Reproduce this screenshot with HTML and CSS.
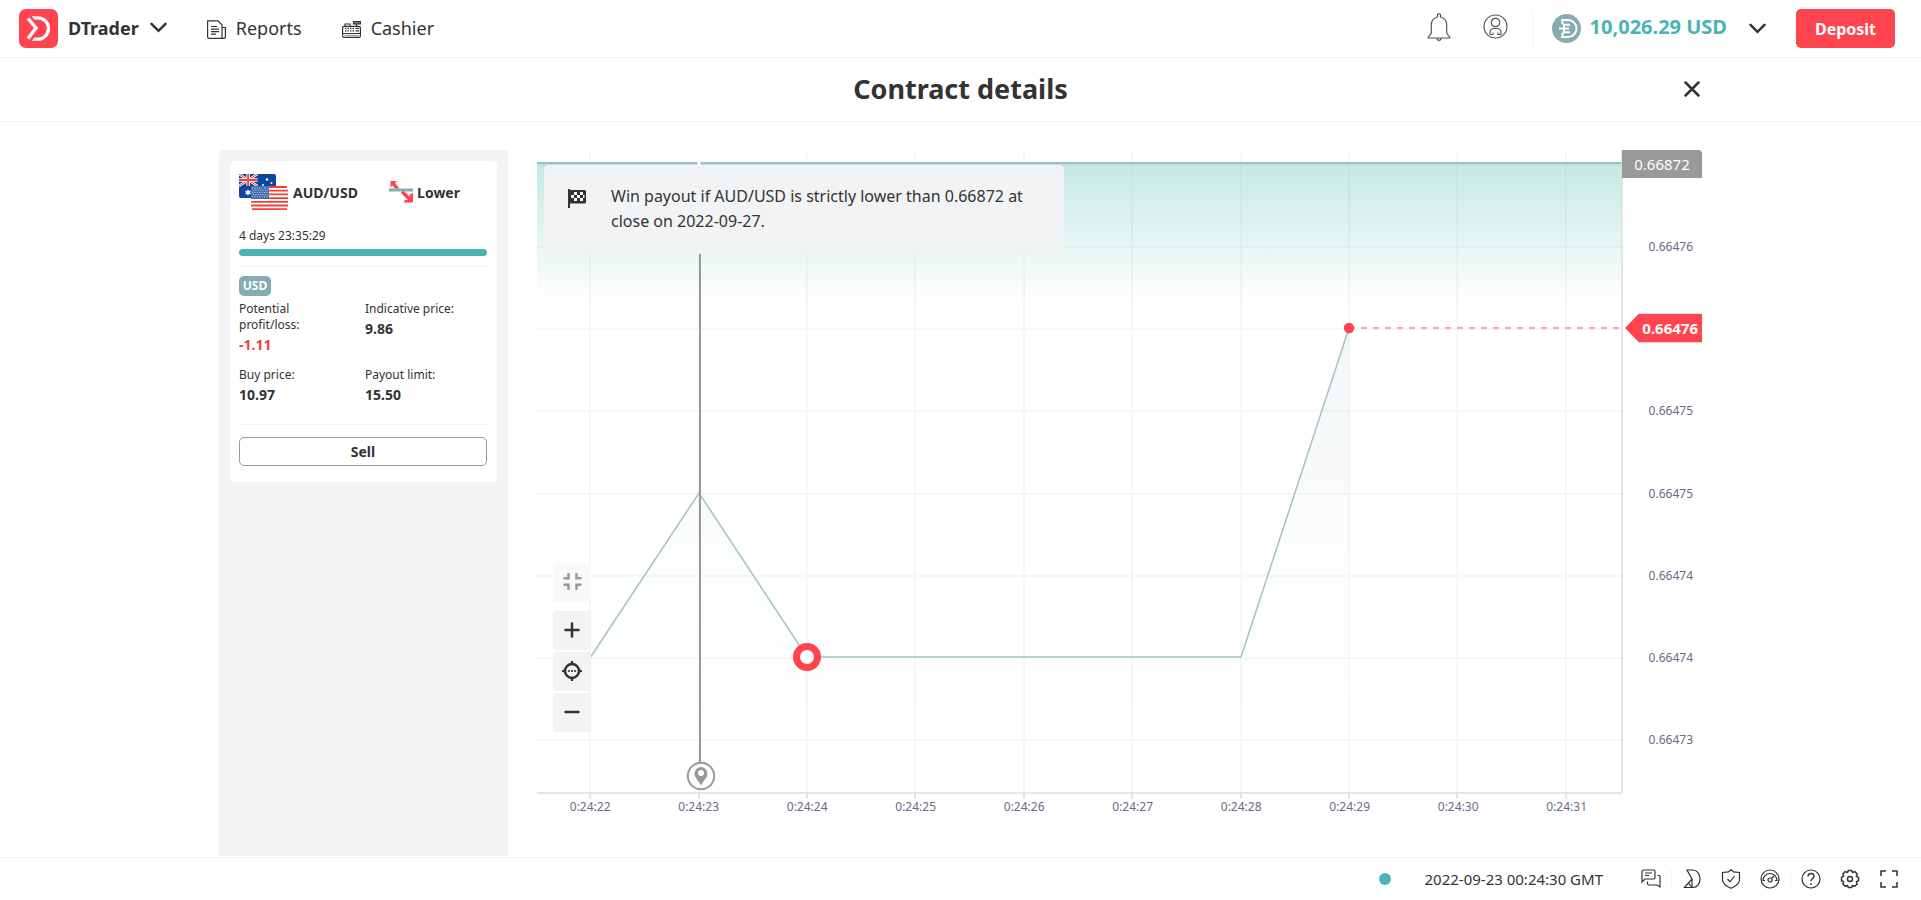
FILE: index.html
```html
<!DOCTYPE html>
<html lang="en">
<head>
<meta charset="utf-8">
<title>DTrader - Contract details</title>
<link rel="stylesheet" href="styles.css">
</head>
<body>
<header class="header">
  <svg class="logo" viewBox="0 0 39 39" aria-hidden="true"><rect width="39" height="39" rx="7" fill="#ff444f"/><path d="M13 8.800h6a10.500 10.700 0 0 1 0 21.400h-6.500" fill="none" stroke="#fff" stroke-width="3.200"/><path d="M9.500 7.500L18 19.500 9.500 31.500" fill="none" stroke="#ff444f" stroke-width="6"/><path d="M9 9.500L17 19 9 29.500" fill="none" stroke="#fff" stroke-width="3.400"/></svg>
  <button class="platform" type="button">DTrader
    <svg width="17" height="11" viewBox="0 0 17 11"><path d="M1.500 1.800l7 7 7-7" class="chev"/></svg>
  </button>
  <nav class="nav">
    <a href="#reports"><svg width="19" height="19" viewBox="0 0 19 19" class="line"><path d="M.6.800h10.400l4 4v13.600H2a1.400 1.400 0 0 1-1.400-1.400z"/><path d="M15 7.500h3.400V17a1.400 1.400 0 0 1-1.400 1.400h-2.500M4 6.500h6M4 9.200h8M4 11.700h8M4 14.200h5"/></svg>Reports</a>
    <a href="#cashier"><svg width="19" height="19" viewBox="0 0 19 19" class="line"><path d="M.6 13V7.500Q.6 6.300 2 6.300h15q1.400 0 1.400 1.200V16q0 1.400-1.400 1.400H2Q.6 17.400.6 16zM.6 13.500h18"/><path d="M3 6V4h5v2M14.500 4v2"/><path d="M11.500 1.500h7v2.500h-7z" fill="#777"/><path d="M2.500 15.500h14" stroke="#999"/><path d="M3 8.300h9M3 10.800h9" stroke-dasharray="1.500 1"/><path d="M13.500 8.300h3.500M13.500 10.800h3.500"/></svg>Cashier</a>
  </nav>
  <div class="account">
    <button type="button" class="bare" aria-label="Notifications"><svg width="24" height="28" viewBox="0 0 24 28" class="line thin"><path d="M10.500 4V1.200q1.500-.8 3 0V4c4 1 6.200 4 6.200 8v8l3 4.200v.8H1.300v-.8l3-4.200v-8c0-4 2.200-7 6.200-8zM10 25.300q0 2 2 2t2-2"/></svg></button>
    <button type="button" class="bare" aria-label="Account settings"><svg width="25" height="25" viewBox="0 0 25 25" class="line thin"><circle cx="12.500" cy="12.500" r="11.500"/><circle cx="12.500" cy="8.500" r="4.200"/><path d="M7 20.500v-2q0-4 4-4h3q4 0 4 4v2h-3v-2M10 20.500v-2M7 20.500h3"/></svg></button>
    <button type="button" class="balance">
      <svg width="29" height="29" viewBox="0 0 29 29"><circle cx="14.500" cy="14.500" r="14.500" fill="#85acb0"/><path d="M9 6h7a8.500 8.500 0 0 1 0 17H9M10.500 6v4.500M10.500 18.500V23M11.500 10.800H18M7 14.500h10M11.500 18.200H18M12 10v9" fill="none" stroke="#fff" stroke-width="2"/></svg>
      <span>10,026.29 USD</span>
      <svg width="17" height="11" viewBox="0 0 17 11"><path d="M1.500 1.800l7 7 7-7" class="chev"/></svg>
    </button>
    <button type="button" class="deposit">Deposit</button>
  </div>
</header>

<div class="titlebar">
  <h1>Contract details</h1>
  <button type="button" class="close" aria-label="Close"><svg width="16" height="16" viewBox="0 0 16 16"><path d="M1.500 1.500l13 13m0-13l-13 13" stroke="#333" stroke-width="2.500" stroke-linecap="round"/></svg></button>
</div>

<main class="content">
  <aside class="drawer">
    <section class="card">
      <div class="card-head">
        <svg width="49" height="36" viewBox="0 0 49 36" aria-hidden="true">
          <rect width="37" height="24" rx="2" fill="#0d47a1"/>
          <path d="M0 0l18.500 12M18.500 0L0 12" stroke="#fff" stroke-width="2.400"/><path d="M0 0l18.500 12M18.500 0L0 12" stroke="#f44336" stroke-width="1"/>
          <path d="M9.200 0v12M0 6h18.500" stroke="#fff" stroke-width="3.600"/><path d="M9.200 0v12M0 6h18.500" stroke="#f44336" stroke-width="2"/>
          <path d="M9 15l.9 1.900 2.100-.4-1 1.900 1 1.800-2.100-.3L9 22l-.9-2.100-2.100.3 1-1.800-1-1.900 2.100.4z" fill="#fff"/>
          <g fill="#fff"><circle cx="28" cy="5.500" r="1.200"/><circle cx="24" cy="11" r="1"/><circle cx="32.500" cy="9" r="1"/></g>
          <rect x="12" y="12" width="37" height="24" rx="2" fill="#fff"/>
          <path d="M13 13h35M12 16.700h37M12 20.400h37M12 24.100h37M12 27.800h37M12 31.500h37M13 35.100h35" stroke="#f44336" stroke-width="1.800"/>
          <rect x="12" y="12" width="18" height="13" fill="#3f6ab3"/>
          <path d="M13 14h17M14 16.200h16M13 18.400h17M14 20.600h16M13 22.800h17" stroke="#d5def0" stroke-width="1" stroke-dasharray="1 1.400"/>
        </svg>
        <strong class="symbol">AUD/USD</strong>
        <span class="type"><svg width="24" height="22" viewBox="0 0 24 22" aria-hidden="true"><path d="M1.500 0H8L6 2l4.500 5.500H6L3.700 4.500 1.500 6.500z" fill="#ff444f"/><path d="M13 10.500l8 8" stroke="#ff444f" stroke-width="3.600"/><path d="M24 12v9.500h-9.500l1.500-2.500h4.500v-5.500z" fill="#ff444f"/><path d="M0 7.500h24v3H0z" fill="#85acb0"/></svg><strong>Lower</strong></span>
      </div>
      <label class="remaining" for="time-left">4 days 23:35:29</label>
      <progress class="bar" id="time-left" value="100" max="100"></progress>
      <div class="details">
        <span class="badge">USD</span>
        <dl class="figures">
          <div><dt>Potential profit/loss:</dt><dd class="loss">-1.11</dd></div>
          <div><dt>Indicative price:</dt><dd>9.86</dd></div>
          <div><dt>Buy price:</dt><dd>10.97</dd></div>
          <div><dt>Payout limit:</dt><dd>15.50</dd></div>
        </dl>
      </div>
      <div class="card-foot"><button type="button" class="sell">Sell</button></div>
    </section>
  </aside>

  <section class="chart" aria-label="AUD/USD chart">
    <div class="plot">
      <svg class="canvas" viewBox="0 0 1085 643" preserveAspectRatio="none" aria-hidden="true">
        <defs>
          <linearGradient id="win" x1="0" y1="0" x2="0" y2="1"><stop offset="0" stop-color="#00a088" stop-opacity=".23"/><stop offset="1" stop-color="#00a088" stop-opacity="0"/></linearGradient>
          <linearGradient id="area" gradientUnits="userSpaceOnUse" x1="0" y1="178" x2="0" y2="600"><stop offset="0" stop-color="#85acb0" stop-opacity=".1"/><stop offset=".5" stop-color="#85acb0" stop-opacity=".03"/><stop offset="1" stop-color="#85acb0" stop-opacity="0"/></linearGradient>
        </defs>
        <path class="grid" d="M53 0v643M162 0v643M270 0v643M378 0v643M487 0v643M595 0v643M704 0v643M812 0v643M920 0v643M1029 0v643M0 15h1085M0 97h1089M0 179h1085M0 261h1089M0 344h1089M0 426h1089M0 508h1089M0 590h1089"/>
        <path d="M0 13h1085v140H0z" fill="url(#win)"/>
        <path d="M53 508L162 343 270 507H704L812 178V643H53z" fill="url(#area)"/>
        <path class="price" d="M53 508L162 343 270 507H704L812 178"/>
        <path class="barrier" d="M0 13h1085"/>
        <path class="spot" d="M812 178h274"/>
        <path d="M162 0v16" stroke="#fff" stroke-width="3"/>
        <path d="M163 90V613" stroke="#999" stroke-width="2"/>
        <path class="axis" d="M1085 0V643M0 643H1085"/>
        <path class="axis" d="M53 643v6M162 643v6M270 643v6M378 643v6M487 643v6M595 643v6M704 643v6M812 643v6M920 643v6M1029 643v6"/>
      </svg>
      <svg class="marker" style="left:15.100%;top:97.300%" width="30" height="30" viewBox="0 0 30 30"><circle cx="15" cy="15" r="13.200" fill="#fff" stroke="#999" stroke-width="2"/><path fill-rule="evenodd" d="M15 6a6.500 6.500 0 0 1 6.500 6.500C21.500 17 17 20 15 24.500 13 20 8.500 17 8.500 12.500A6.500 6.500 0 0 1 15 6zm0 3a3 3 0 1 0 0 6 3 3 0 0 0 0-6z" fill="#999"/></svg>
      <svg class="marker" style="left:24.900%;top:78.800%" width="30" height="30" viewBox="0 0 30 30"><circle cx="15" cy="15" r="10.500" fill="#fff" stroke="#ff444f" stroke-width="7"/></svg>
      <svg class="marker" style="left:74.800%;top:27.700%" width="12" height="12" viewBox="0 0 12 12"><circle cx="6" cy="6" r="5.200" fill="#ff444f"/></svg>
      <div class="notice">
        <svg width="18" height="19" viewBox="0 0 18 19" aria-hidden="true"><path d="M0 0h2v1h14.500Q18 1 18 2.500V13q0 1.500-1.500 1.500H2V19H0z" fill="#333"/><path d="M6 3h3v3H6zM12 3h3v3h-3zM3 6h3v3H3zM9 6h3v3H9zM6 9h3v3H6zM12 9h3v3h-3zM15 6h1.500v3H15z" fill="#f2f3f4"/></svg>
        <p>Win payout if AUD/USD is strictly lower than 0.66872 at close on 2022-09-27.</p>
      </div>
      <div class="tools">
        <button type="button" class="faded" aria-label="Collapse"><svg width="19" height="17" viewBox="0 0 19 17"><path d="M1.500 5.200H5.500V1M17.500 5.200h-4V1M1.500 11.800h4V16M17.500 11.800h-4V16"/></svg></button>
        <button type="button" aria-label="Zoom in"><svg width="16" height="16" viewBox="0 0 16 16"><path d="M1.500 8h13M8 1.500v13"/></svg></button>
        <button type="button" aria-label="Center chart"><svg width="20" height="20" viewBox="0 0 20 20"><circle cx="10" cy="10" r="7"/><path d="M10 1v2M10 17v2M1 10h2M17 10h2"/><path d="M7 10h.1M10 10h.1M13 10h.1" stroke-width="2"/></svg></button>
        <button type="button" aria-label="Zoom out"><svg width="16" height="16" viewBox="0 0 16 16"><path d="M1.500 8h13"/></svg></button>
      </div>
    </div>
    <div class="y-axis">
      <span class="limit">0.66872</span>
      <span class="tick" style="top:14.900%">0.66476</span>
      <span class="current" style="top:27.700%">0.66476</span>
      <span class="tick" style="top:40.500%">0.66475</span>
      <span class="tick" style="top:53.400%">0.66475</span>
      <span class="tick" style="top:66.100%">0.66474</span>
      <span class="tick" style="top:78.900%">0.66474</span>
      <span class="tick" style="top:91.600%">0.66473</span>
    </div>
    <div class="x-axis">
      <span style="left:4.900%">0:24:22</span><span style="left:14.900%">0:24:23</span><span style="left:24.900%">0:24:24</span><span style="left:34.900%">0:24:25</span><span style="left:44.900%">0:24:26</span><span style="left:54.900%">0:24:27</span><span style="left:64.900%">0:24:28</span><span style="left:74.900%">0:24:29</span><span style="left:84.900%">0:24:30</span><span style="left:94.900%">0:24:31</span>
    </div>
  </section>
</main>

<footer class="footer">
  <span class="status" role="img" aria-label="Online"></span>
  <time class="clock">2022-09-23 00:24:30 GMT</time>
  <div class="links">
    <button type="button" class="bare" aria-label="Live chat"><svg width="20" height="20" viewBox="0 0 20 20" class="line"><path d="M1 13V2.500Q1 1 2.500 1h10Q14 1 14 2.500v6q0 1.500-1.500 1.500H4zM4 4h7M4 6.500h4M16.500 6.500H18q1 0 1 1V18l-3-2H8q-1.500 0-1.500-1.500v-2"/></svg></button>
    <i class="sep"></i>
    <a href="#deriv" aria-label="Deriv"><svg width="20" height="20" viewBox="0 0 20 20" class="line"><path d="M5 1h6c4 0 7 4 7 9s-3 8.500-7 8.500H2.500L10 10zM10 10v8.500M6.500 14l3.500 4.500"/></svg></a>
    <a href="#responsible" aria-label="Responsible trading"><svg width="20" height="20" viewBox="0 0 20 20" class="line"><path d="M10 .8l2.500 2 6 .7V11c0 4-4.500 6.500-8.500 8.300C6 17.500 1.500 15 1.500 11V3.500l6-.7zM6.500 10l2.500 2.800L13.500 7"/></svg></a>
    <a href="#limits" aria-label="Account limits"><svg width="20" height="20" viewBox="0 0 20 20" class="line"><circle cx="10" cy="10" r="9"/><path d="M5 11.500H3A7 7 0 1 1 17 11.500H15M11.500 9.500L14 7"/><circle cx="10" cy="11" r="2"/></svg></a>
    <i class="sep"></i>
    <a href="#help" aria-label="Help centre"><svg width="20" height="20" viewBox="0 0 20 20" class="line"><circle cx="10" cy="10" r="9"/><path d="M7 7.500c0-4 6-4 6-.3 0 2.300-3 2.300-3 4.800M10 14.300v1.700" stroke-width="1.500"/></svg></a>
    <button type="button" class="bare" aria-label="Settings"><svg width="20" height="20" viewBox="0 0 20 20" class="line"><path d="M8.300 1.500h3.400l.8 2 2.300-.9 2.400 2.400-.9 2.200 2.200.9v3.600l-2.200.9.9 2.400-2.400 2.300-2.300-.9-.8 2.100H8.300l-.8-2.100-2.300.9-2.400-2.300.9-2.400-2.200-.9V8.100l2.200-.9L2.800 5l2.400-2.400 2.300.9z" stroke-width="1.500" stroke-linejoin="round"/><circle cx="10" cy="10" r="2.500" stroke-width="1.500"/></svg></button>
    <button type="button" class="bare" aria-label="Full screen"><svg width="20" height="20" viewBox="0 0 20 20" class="line"><path d="M2 7V2h5M13 2h5v5M18 13v5h-5M7 18H2v-5" stroke-width="1.500"/></svg></button>
  </div>
</footer>
</body>
</html>
```

FILE: styles.css
```css
* { box-sizing: border-box; }
body {
  margin: 0;
  min-height: 100vh;
  display: flex;
  flex-direction: column;
  background: #fff;
  color: #333;
  font-family: "Noto Sans", "Open Sans", sans-serif;
}
button { font: inherit; color: inherit; padding: 0; border: 0; background: none; cursor: pointer; }
a { color: inherit; text-decoration: none; }
svg { display: block; flex: none; }
.line { fill: none; stroke: #333; stroke-width: 1.2; }
.thin { stroke: #555; }
.chev { fill: none; stroke: #333; stroke-width: 2.500; stroke-linecap: round; }

.header {
  height: 58px;
  display: flex;
  align-items: center;
  padding: 0 26px 0 19px;
  border-bottom: 1px solid #f2f3f4;
}
.logo { width: 39px; height: 39px; }
.platform { display: flex; align-items: center; gap: 11px; margin-left: 10px; font-size: 18px; line-height: 24px; font-weight: 700; }
.nav { display: flex; gap: 40px; margin-left: 40px; font-size: 18px; line-height: 24px; }
.nav a { display: flex; align-items: center; gap: 10px; }
.platform, .nav { padding-bottom: 2px; }
.nav svg { margin-top: 4px; }
.account { display: flex; align-items: center; margin-left: auto; }
.account .bare { margin-right: 32px; padding-bottom: 4px; }
.account .bare + .bare { margin-right: 24px; }
.balance {
  height: 39px;
  display: flex;
  align-items: center;
  gap: 9px;
  padding-left: 19px;
  border-left: 1px solid #f2f3f4;
  color: #4bb4b3;
  font-size: 20px;
  line-height: 24px;
  font-weight: 700;
}
.balance span { margin-right: 13px; padding-bottom: 4px; }
.deposit {
  width: 99px;
  height: 39px;
  margin-left: 30px;
  border-radius: 5px;
  background: #ff444f;
  color: #fff;
  font-size: 16px;
  font-weight: 700;
}

.titlebar {
  height: 64px;
  display: grid;
  grid-template-columns: 1fr auto 1fr;
  align-items: center;
  width: 100%;
  padding: 0 221px 2px;
  border-bottom: 1px solid #f2f3f4;
}
.titlebar h1 { grid-column: 2; margin: 0; font-size: 27px; line-height: 36px; }
.close { justify-self: end; }

.content {
  flex: 1;
  display: flex;
  gap: 29px;
  width: 100%;
  max-width: 1483px;
  margin: 0 auto;
  padding-top: 28px;
}
.drawer { width: 289px; flex: none; padding: 11px; margin-bottom: 1px; border-radius: 5px 0 0 0; background: #f2f3f4; }
.card { padding: 13px 10px 16px 9px; border-radius: 5px; background: #fff; }
.card-head { display: flex; align-items: center; font-size: 14px; }
.symbol { margin-left: 5px; }
.type { display: flex; align-items: center; gap: 4px; margin-left: auto; padding-right: 27px; }
.remaining { display: block; margin-top: 16px; font-size: 12px; line-height: 20px; }
.bar {
  display: block;
  width: 100%;
  height: 7px;
  margin-top: 3px;
  border: 0;
  border-radius: 4px;
  overflow: hidden;
  appearance: none;
  background: #f2f3f4;
}
.bar::-webkit-progress-bar { background: #f2f3f4; }
.bar::-webkit-progress-value { background: #4bb4b3; }
.details { margin-top: 10px; padding-top: 9px; border-top: 1px solid #f2f3f4; }
.badge {
  display: block;
  width: 32px;
  border-radius: 5px;
  background: #85acb0;
  color: #fff;
  font-size: 12px;
  font-weight: 700;
  line-height: 20px;
  text-align: center;
}
.figures { display: grid; grid-template-columns: 1fr 1fr; column-gap: 4px; row-gap: 10px; margin: 5px 0 0; }
.figures dt { max-width: 100px; font-size: 12px; line-height: 16px; }
.figures dd { margin: 0; font-size: 14px; font-weight: 700; line-height: 24px; }
.figures .loss { color: #ec3f3f; }
.card-foot { margin-top: 17px; padding-top: 12px; border-top: 1px solid #f2f3f4; }
.sell { display: block; width: 100%; height: 29px; border: 1px solid #999; border-radius: 5px; font-size: 14px; font-weight: 700; }

.chart { flex: 1; min-width: 0; display: grid; grid-template: 1fr 64px / 1fr 80px; color: #6a6a86; }
.plot, .y-axis, .x-axis { position: relative; }
.canvas { position: absolute; width: 100%; height: 100%; overflow: visible; }
.canvas path { vector-effect: non-scaling-stroke; }
.grid { fill: none; stroke: #f6f7f8; stroke-width: 2; }
.price { fill: none; stroke: #a3c2c5; stroke-width: 1.500; }
.barrier { stroke: #9dbfbd; stroke-width: 2; }
.spot { stroke: #ffa3ab; stroke-width: 2; stroke-dasharray: 6 6; }
.axis { fill: none; stroke: #dddde3; stroke-width: 1.500; }
.marker { position: absolute; transform: translate(-50%, -50%); }
.notice {
  position: absolute;
  top: 15px;
  left: 7px;
  width: 520px;
  display: flex;
  gap: 25px;
  padding: 19px 24px 20px;
  border-radius: 5px;
  background: #f2f3f4;
  color: #333;
  font-size: 16px;
  line-height: 25px;
}
.notice svg { margin-top: 5px; }
.notice p { margin: 0; }
.tools { position: absolute; left: 16px; bottom: 61px; display: grid; gap: 2px; }
.tools button { width: 38px; height: 39px; display: grid; place-items: center; padding-bottom: 2px; border-radius: 4px; background: #f2f3f4; }
.tools svg { fill: none; stroke: #333; stroke-width: 2.500; stroke-linecap: round; }
.tools .faded { margin-bottom: 7px; background: #f8f9f9; }
.tools .faded svg { stroke: #999; }
.y-axis span { position: absolute; }
.y-axis .tick { right: 9px; transform: translateY(-50%); font-size: 12px; }
.y-axis .limit { top: 0; left: 0; right: 0; border-radius: 0 4px 0 0; background: #999; color: #fff; font-size: 15px; line-height: 28px; text-align: center; }
.y-axis .current {
  left: 3px;
  right: 0;
  padding-right: 4px;
  transform: translateY(-50%);
  background: #ff444f;
  clip-path: polygon(14px 0, 100% 0, 100% 100%, 14px 100%, 0 50%);
  color: #fff;
  font-size: 15px;
  font-weight: 700;
  line-height: 29px;
  text-align: right;
}
.x-axis span { position: absolute; top: 6px; transform: translateX(-50%); font-size: 12px; line-height: 16px; }

.footer { height: 43px; display: flex; align-items: center; justify-content: flex-end; padding: 0 22px; border-top: 1px solid #f2f3f4; }
.status { width: 12px; height: 12px; border-radius: 50%; background: #4bb4b3; }
.clock { margin: 0 38px 0 34px; padding-bottom: 1px; font-size: 15px; }
.links { display: flex; align-items: center; gap: 19px; }
.sep { width: 1px; height: 20px; margin: 0 -9px; background: #f2f3f4; }
```
